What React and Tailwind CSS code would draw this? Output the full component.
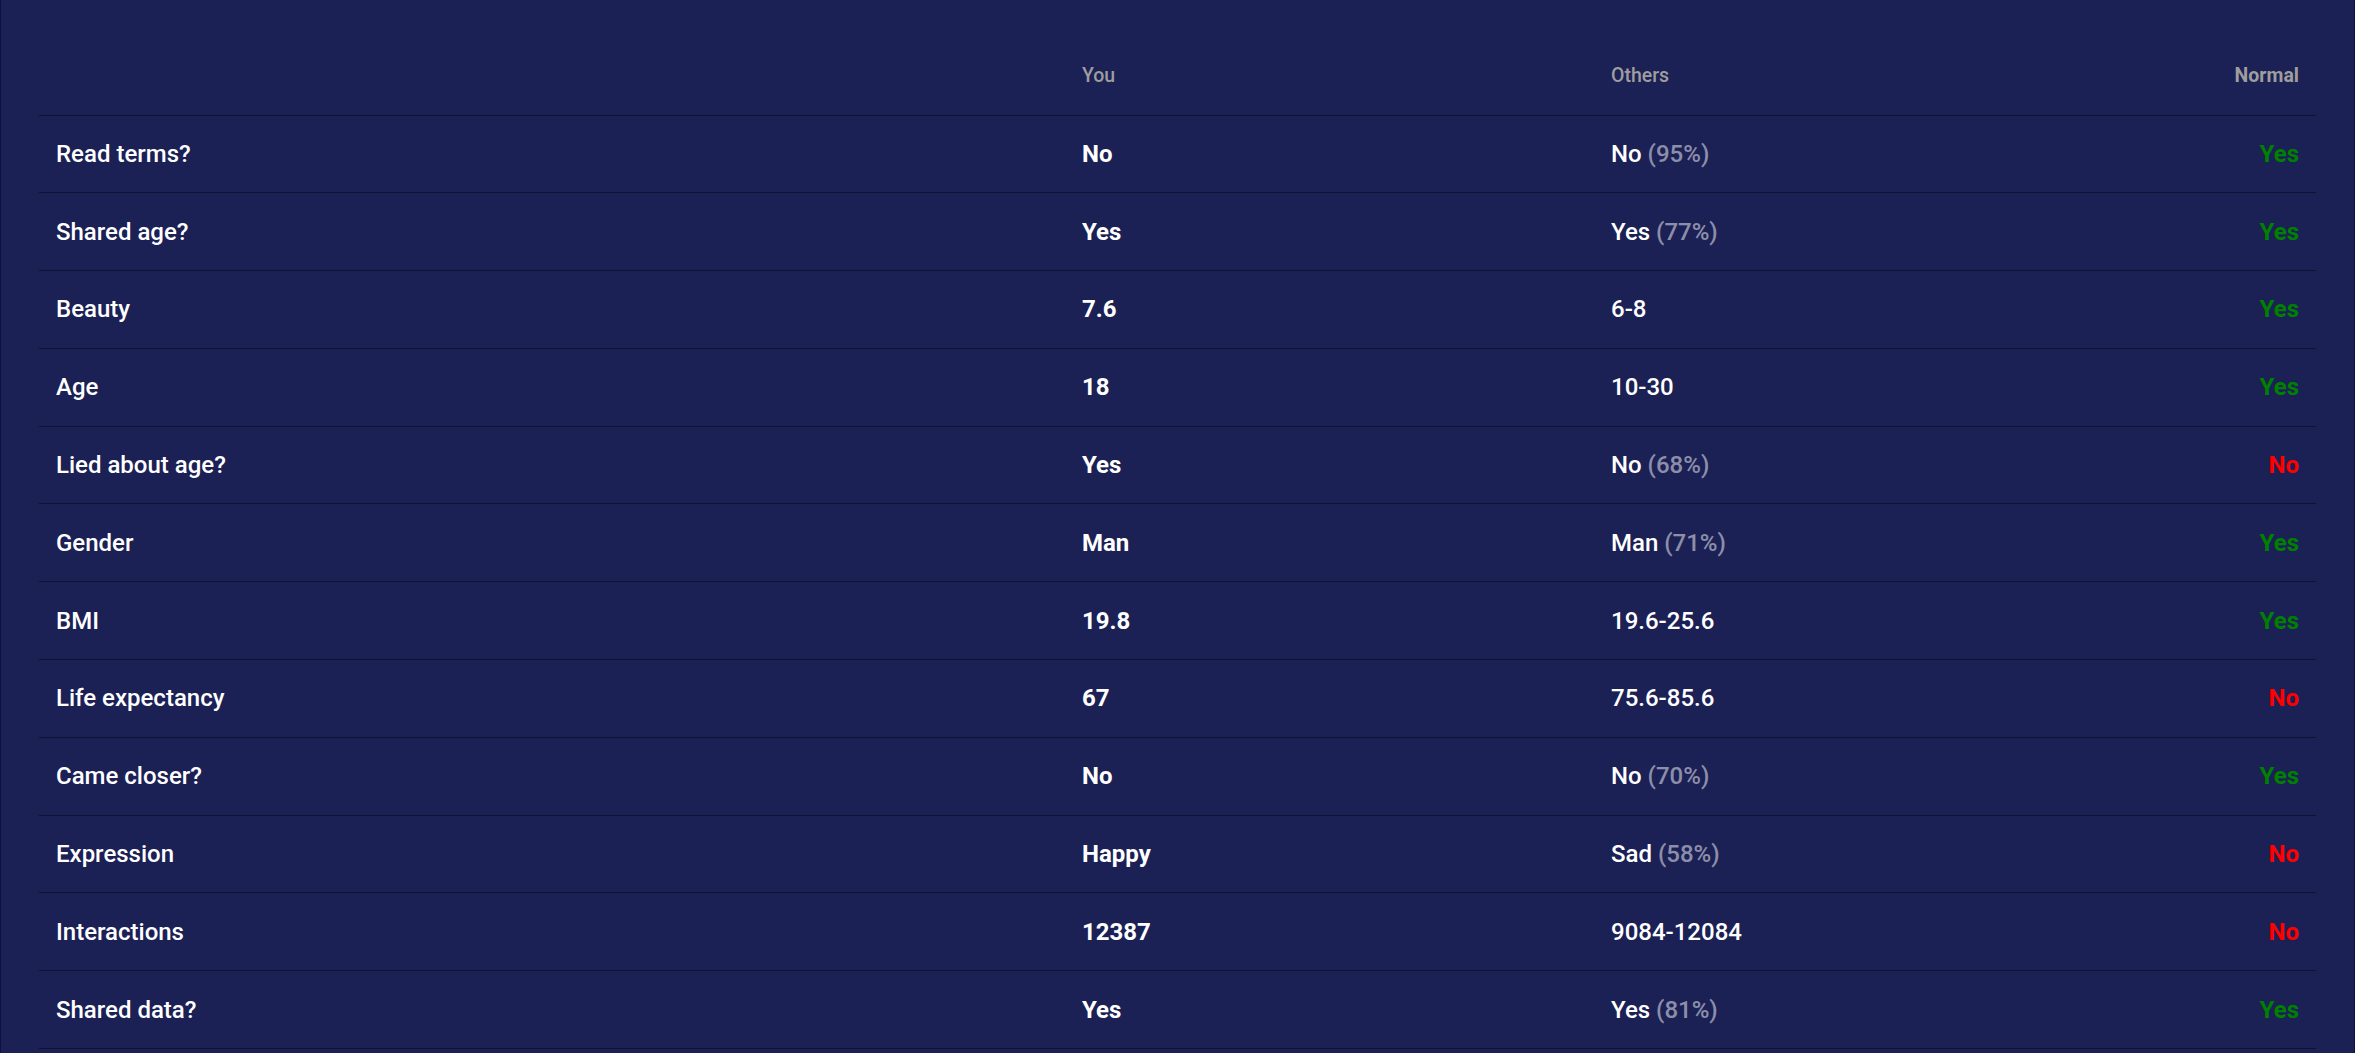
const rows = [
  { label: 'Read terms?', you: 'No', others: 'No', pct: '95%', normal: true },
  { label: 'Shared age?', you: 'Yes', others: 'Yes', pct: '77%', normal: true },
  { label: 'Beauty', you: '7.6', others: '6-8', normal: true },
  { label: 'Age', you: '18', others: '10-30', normal: true },
  { label: 'Lied about age?', you: 'Yes', others: 'No', pct: '68%', normal: false },
  { label: 'Gender', you: 'Man', others: 'Man', pct: '71%', normal: true },
  { label: 'BMI', you: '19.8', others: '19.6-25.6', normal: true },
  { label: 'Life expectancy', you: '67', others: '75.6-85.6', normal: false },
  { label: 'Came closer?', you: 'No', others: 'No', pct: '70%', normal: true },
  { label: 'Expression', you: 'Happy', others: 'Sad', pct: '58%', normal: false },
  { label: 'Interactions', you: '12387', others: '9084-12084', normal: false },
  { label: 'Shared data?', you: 'Yes', others: 'Yes', pct: '81%', normal: true },
];

export default function App() {
  return (
    <div
      className="min-h-[1053px] bg-[#1b2055] border-x border-[#0e1140] px-[38px] pt-[37px]"
      style={{ fontFamily: 'Roboto, "Liberation Sans", sans-serif' }}
    >
      <table className="w-full table-fixed border-collapse">
        <colgroup>
          <col className="w-[1026px]" />
          <col className="w-[529px]" />
          <col />
          <col className="w-[220px]" />
        </colgroup>
        <thead>
          <tr className="h-[78px] border-b border-[#10132f]">
            <th />
            <th className="px-[17px] text-left text-[19.5px] font-medium text-[#9e9e9e]">You</th>
            <th className="px-[17px] text-left text-[19.5px] font-medium text-[#9e9e9e]">Others</th>
            <th className="px-[17px] text-right text-[19.5px] font-bold text-[#9e9e9e]">Normal</th>
          </tr>
        </thead>
        <tbody>
          {rows.map((r) => (
            <tr key={r.label} className="h-[77.8px] border-b border-[#10132f] text-[24px]">
              <td className="px-[17px] font-medium text-white">{r.label}</td>
              <td className="px-[17px] font-bold text-white">{r.you}</td>
              <td className="px-[17px] font-medium text-white">
                {r.others}
                {r.pct && <span className="text-white/50"> ({r.pct})</span>}
              </td>
              <td
                className={`px-[17px] text-right font-bold ${
                  r.normal ? 'text-[#008000]' : 'text-[#ff0000]'
                }`}
              >
                {r.normal ? 'Yes' : 'No'}
              </td>
            </tr>
          ))}
        </tbody>
      </table>
    </div>
  );
}
